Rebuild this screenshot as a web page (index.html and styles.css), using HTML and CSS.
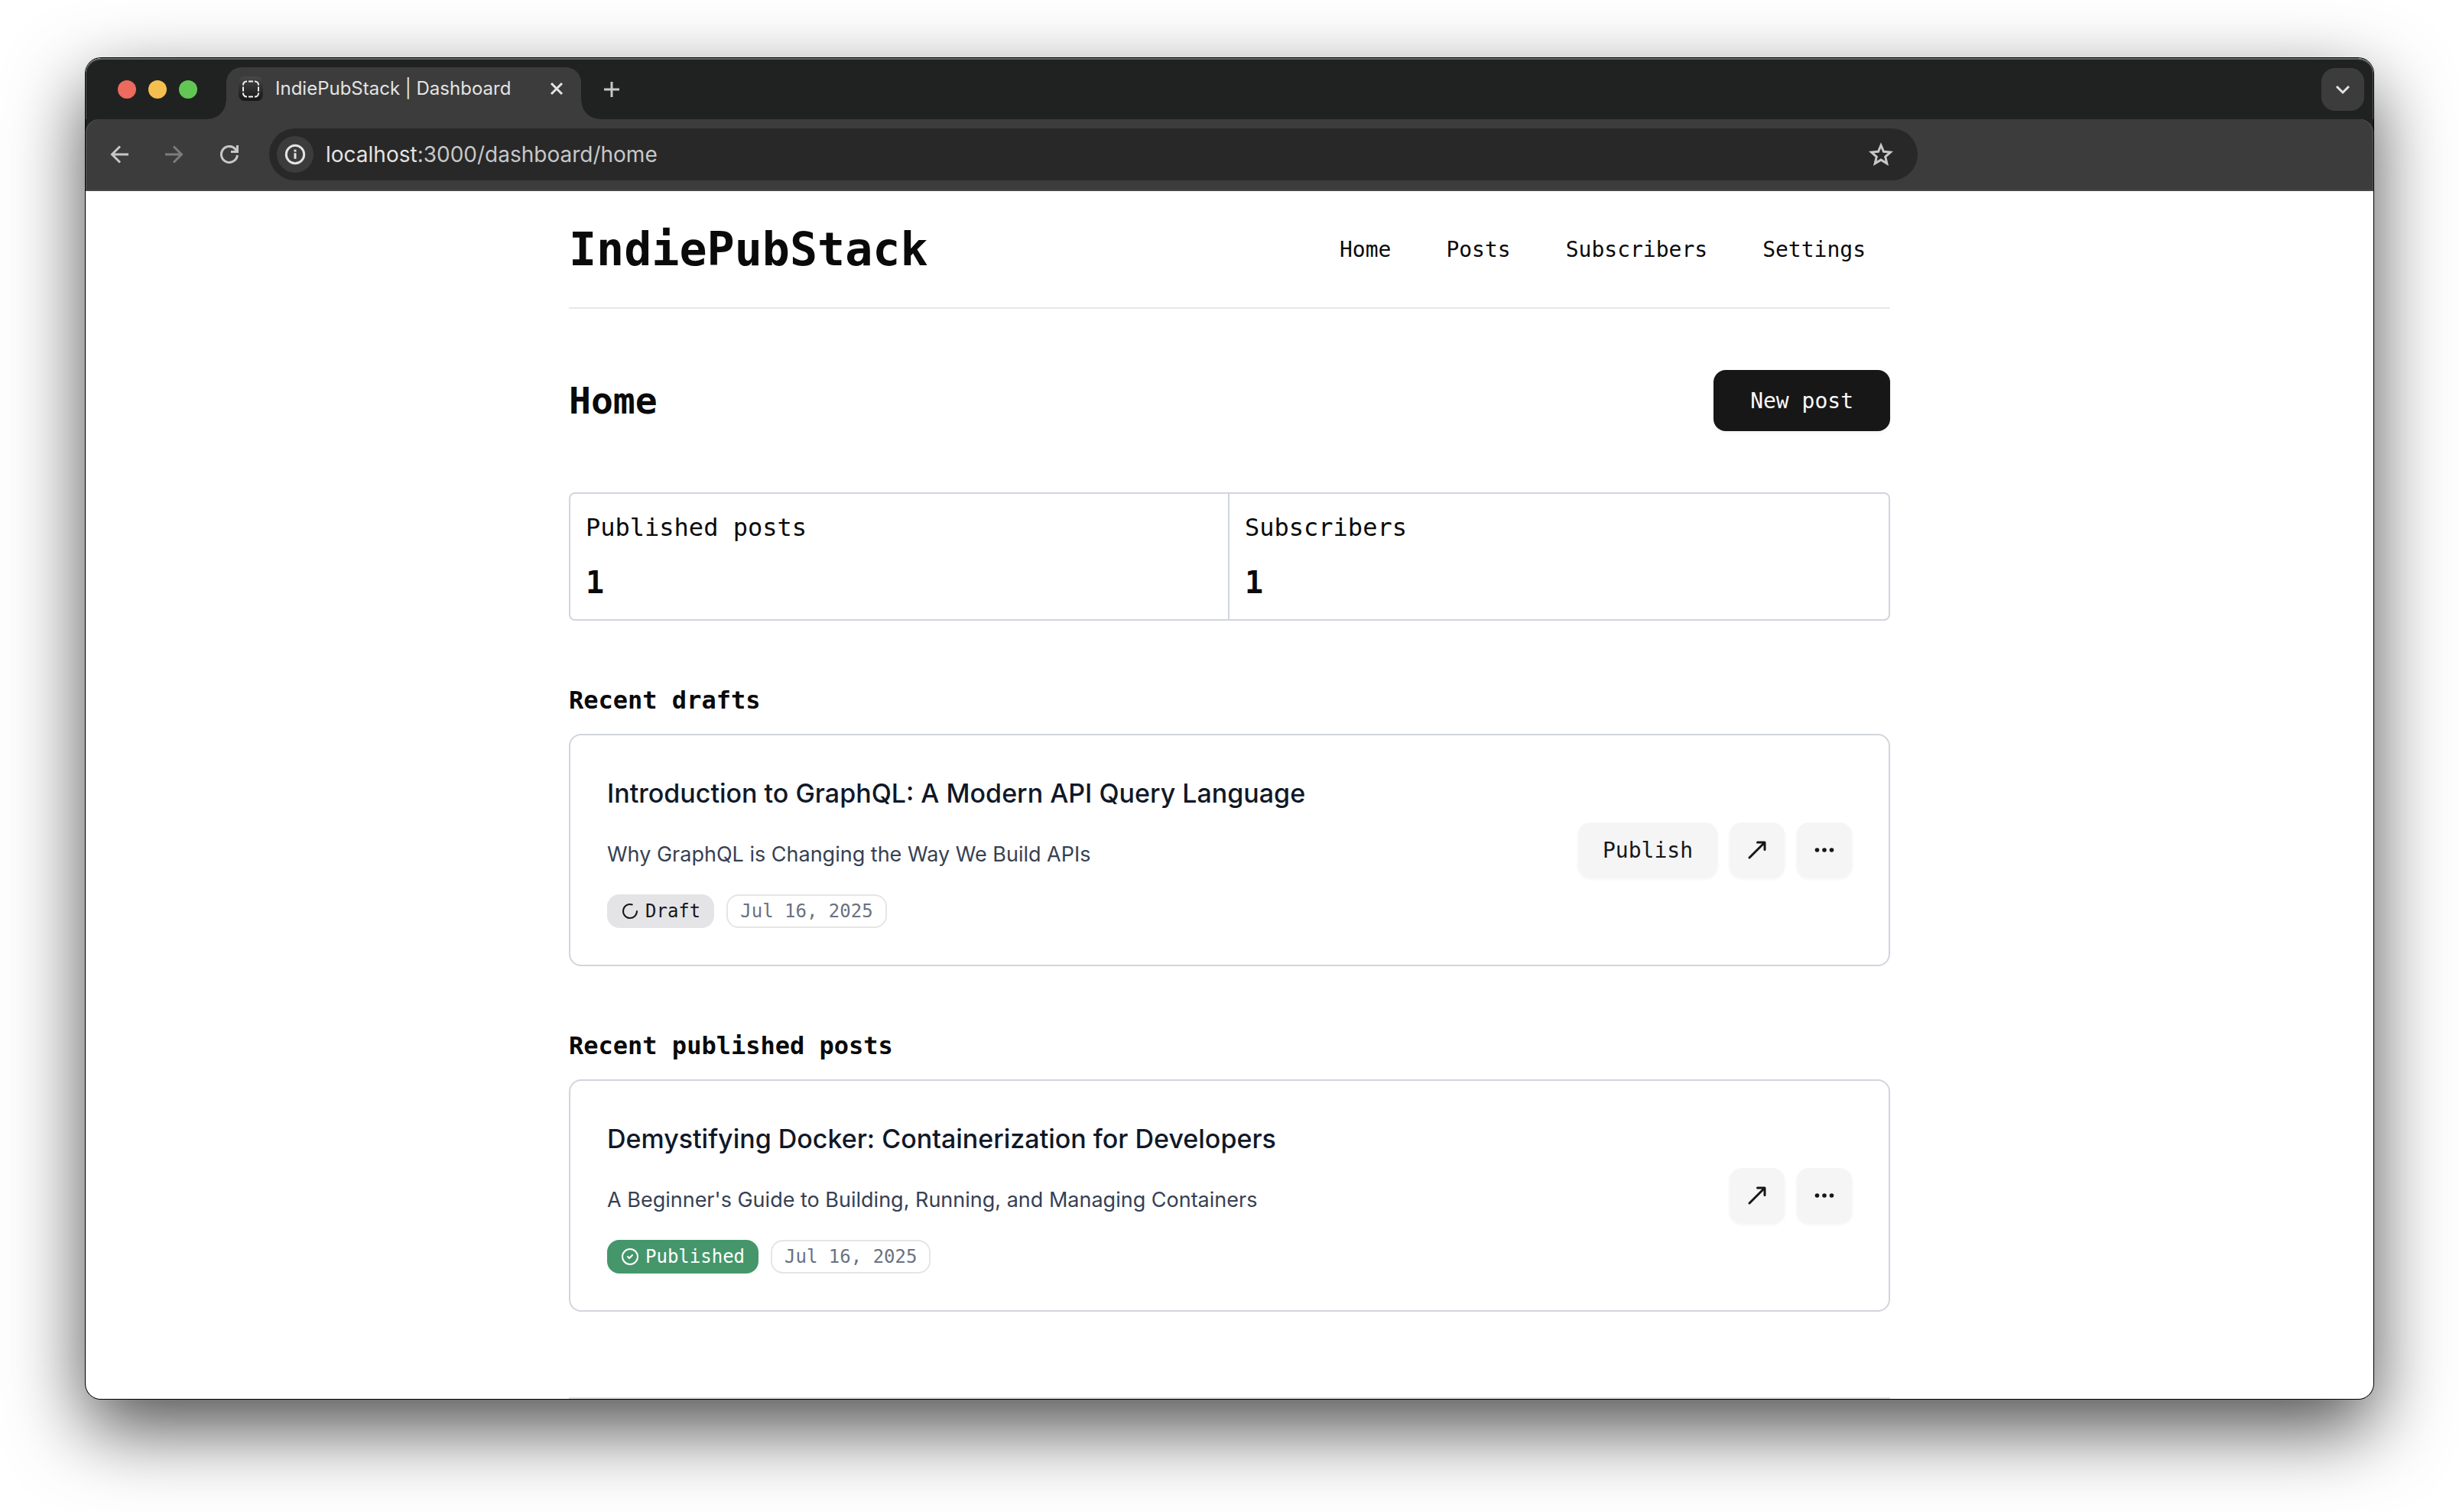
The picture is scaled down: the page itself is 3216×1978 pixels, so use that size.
FILE: index.html
```html
<!DOCTYPE html>
<html lang="en">
<head>
<meta charset="utf-8">
<title>IndiePubStack | Dashboard</title>
<link rel="stylesheet" href="styles.css">
</head>
<body>
<div class="window">
  <div class="tab-strip">
    <div class="lights">
      <span class="light light-close"></span>
      <span class="light light-min"></span>
      <span class="light light-max"></span>
    </div>
    <div class="tab">
      <svg class="favicon" viewBox="0 0 32 32" aria-hidden="true">
        <defs>
          <linearGradient id="favicon-bg" x1="0" y1="0" x2="0" y2="1">
            <stop offset="0" stop-color="#484848"/><stop offset="1" stop-color="#161616"/>
          </linearGradient>
        </defs>
        <rect width="32" height="32" rx="8" fill="url(#favicon-bg)" stroke="none"/>
        <g stroke="#f2f2f2" stroke-width="2" stroke-linecap="butt">
          <path d="M13 6.500h6M13 26.500h6M6 13.500v6M26 13.500v6"/>
          <path d="M6 11.500V11a4.500 4.500 0 0 1 4.500-4.500h.5M21 6.500h.5A4.500 4.500 0 0 1 26 11v.5M26 21.500v.5a4.500 4.500 0 0 1-4.500 4.500H21M11 26.500h-.5A4.500 4.500 0 0 1 6 22v-.5"/>
        </g>
      </svg>
      <span class="tab-title">IndiePubStack | Dashboard</span>
      <button class="chrome-btn" aria-label="Close tab">
        <svg viewBox="0 0 24 24"><path d="M5 5l14 14M19 5L5 19"/></svg>
      </button>
    </div>
    <button class="chrome-btn" aria-label="New tab">
      <svg viewBox="0 0 24 24"><path d="M12 2v20M2 12h20"/></svg>
    </button>
    <button class="tab-search" aria-label="Search tabs">
      <svg viewBox="0 0 24 24"><path d="M4 8l8 8 8-8"/></svg>
    </button>
  </div>
  <div class="toolbar">
    <div class="nav-buttons">
      <button class="chrome-btn" aria-label="Back">
        <svg viewBox="0 0 24 24"><path d="M24 12H2M13 1.500L2.500 12 13 22.500"/></svg>
      </button>
      <button class="chrome-btn dim" aria-label="Forward">
        <svg viewBox="0 0 24 24"><path d="M0 12h22M11 1.500L21.500 12 11 22.500"/></svg>
      </button>
      <button class="chrome-btn" aria-label="Reload">
        <svg viewBox="0 0 24 24"><path d="M22.400 13A10.500 10.500 0 1 1 19.800 5L22 8M22.500 0v8.500H14"/></svg>
      </button>
    </div>
    <div class="omnibox">
      <button class="site-info" aria-label="Site information">
        <svg viewBox="0 0 28 28"><circle cx="14" cy="14" r="11.700"/><path d="M14 12.300v7.500M14 7.700v2.700"/></svg>
      </button>
      <span class="url"><span class="host">localhost</span>:3000/dashboard/home</span>
      <button class="chrome-btn star" aria-label="Bookmark this page">
        <svg viewBox="0 0 32 32"><path d="M16 4l3.500 8.300 9 .8-6.800 5.900 2.100 8.800L16 23.100l-7.800 4.700 2.100-8.800-6.800-5.900 9-.8z"/></svg>
      </button>
    </div>
  </div>

  <div class="page">
    <header class="site-header">
      <a class="brand" href="#">IndiePubStack</a>
      <nav class="site-nav">
        <a href="#">Home</a>
        <a href="#">Posts</a>
        <a href="#">Subscribers</a>
        <a href="#">Settings</a>
      </nav>
    </header>

    <main class="main">
      <div class="title-row">
        <h1>Home</h1>
        <button class="btn btn-primary">New post</button>
      </div>

      <dl class="stats">
        <div class="stat"><dt>Published posts</dt><dd>1</dd></div>
        <div class="stat"><dt>Subscribers</dt><dd>1</dd></div>
      </dl>

      <section class="section">
        <h2>Recent drafts</h2>
        <article class="card">
          <div class="card-body">
            <h3>Introduction to GraphQL: A Modern API Query Language</h3>
            <p>Why GraphQL is Changing the Way We Build APIs</p>
            <div class="badges">
              <span class="badge badge-draft">
                <svg viewBox="0 0 24 24"><path d="M21 12a9 9 0 1 1-6.219-8.560"/></svg>Draft</span>
              <span class="badge">Jul 16, 2025</span>
            </div>
          </div>
          <div class="actions">
            <button class="btn">Publish</button>
            <button class="btn btn-icon" aria-label="Open post">
              <svg viewBox="0 0 32 32"><path d="M6 26L25.500 6.500M16.500 6h9.500v9.500"/></svg>
            </button>
            <button class="btn btn-icon" aria-label="More actions">
              <svg class="dots" viewBox="0 0 32 32"><circle cx="6.500" cy="16" r="2.800"/><circle cx="16" cy="16" r="2.800"/><circle cx="25.500" cy="16" r="2.800"/></svg>
            </button>
          </div>
        </article>
      </section>

      <section class="section">
        <h2>Recent published posts</h2>
        <article class="card">
          <div class="card-body">
            <h3>Demystifying Docker: Containerization for Developers</h3>
            <p>A Beginner's Guide to Building, Running, and Managing Containers</p>
            <div class="badges">
              <span class="badge badge-published">
                <svg viewBox="0 0 24 24"><circle cx="12" cy="12" r="10"/><path d="M9 12l2 2 4-4"/></svg>Published</span>
              <span class="badge">Jul 16, 2025</span>
            </div>
          </div>
          <div class="actions">
            <button class="btn btn-icon" aria-label="Open post">
              <svg viewBox="0 0 32 32"><path d="M6 26L25.500 6.500M16.500 6h9.500v9.500"/></svg>
            </button>
            <button class="btn btn-icon" aria-label="More actions">
              <svg class="dots" viewBox="0 0 32 32"><circle cx="6.500" cy="16" r="2.800"/><circle cx="16" cy="16" r="2.800"/><circle cx="25.500" cy="16" r="2.800"/></svg>
            </button>
          </div>
        </article>
      </section>
    </main>
    <footer class="site-footer"></footer>
  </div>
</div>
</body>
</html>
```

FILE: styles.css
```css
*, *::before, *::after { box-sizing: border-box; }

:root {
  --mono: "DejaVu Sans Mono", "Liberation Mono", monospace;
  --sans: Inter, "Liberation Sans", sans-serif;
  --strip: #202221;
  --bar: #3c3c3c;
  --line: #d1d5dc;
  --ink: #0a0a0a;
}

body {
  margin: 0;
  padding: 76px 112px 148px;
  background: #fff;
  color: var(--ink);
  font-family: var(--sans);
}

h1, h2, h3, p, dl, dd { margin: 0; }
button { margin: 0; padding: 0; border: 0; background: none; font: inherit; color: inherit; }
a { color: inherit; text-decoration: none; }
svg { display: block; fill: none; stroke: currentColor; stroke-linecap: round; stroke-linejoin: round; }

.window {
  border-radius: 20px;
  overflow: hidden;
  background: #fff;
  box-shadow: 0 0 0 1px #000, 0 38px 100px rgba(0, 0, 0, 0.7);
}

/* Browser chrome */
.tab-strip {
  display: flex;
  align-items: center;
  height: 80px;
  padding: 0 12px 0 42px;
  border-top: 2px solid #636766;
  border-radius: 20px 20px 0 0;
  background: var(--strip);
  box-shadow: inset 1px 0 #555857, inset -1px 0 #555857;
  color: #c7c7c7;
}
.lights { display: flex; gap: 16px; }
.light { width: 24px; height: 24px; border-radius: 50%; }
.light-close { background: #ed6a5f; }
.light-min { background: #f5bf4f; }
.light-max { background: #62c655; }

.tab {
  position: relative;
  display: flex;
  align-items: center;
  align-self: flex-end;
  width: 464px;
  height: 68px;
  margin: 0 28px 0 38px;
  padding: 0 20px 12px 16px;
  border-radius: 20px 20px 0 0;
  background: var(--bar);
  color: #e3e3e3;
}
.tab::before, .tab::after {
  content: "";
  position: absolute;
  bottom: 0;
  width: 24px;
  height: 24px;
}
.tab::before { right: 100%; background: radial-gradient(circle at 0 0, transparent 23px, var(--bar) 24px); }
.tab::after { left: 100%; background: radial-gradient(circle at 100% 0, transparent 23px, var(--bar) 24px); }
.favicon { width: 32px; height: 32px; margin-right: 16px; }
.tab-title { flex: 1; font-size: 24px; line-height: 32px; white-space: nowrap; }

.chrome-btn svg { width: 24px; height: 24px; stroke-width: 3; stroke-linecap: butt; stroke-linejoin: miter; }
.chrome-btn.dim { color: #7c7c7c; }
.tab-search {
  display: grid;
  place-items: center;
  width: 56px;
  height: 56px;
  margin-left: auto;
  border-radius: 18px;
  background: var(--bar);
  color: #e3e3e3;
}
.tab-search svg { width: 24px; height: 24px; stroke-width: 3; stroke-linecap: butt; stroke-linejoin: miter; }

.toolbar {
  position: relative;
  z-index: 0;
  display: flex;
  align-items: center;
  gap: 40px;
  height: 94px;
  padding: 0 596px 0 32px;
  border-bottom: 2px solid #484848;
  background: linear-gradient(var(--strip), var(--strip)) top / 100% 20px no-repeat;
  background-color: var(--bar);
  color: #c7c7c7;
}
.toolbar::before {
  content: "";
  position: absolute;
  inset: 0;
  z-index: -1;
  border-radius: 18px 18px 0 0;
  background: var(--bar);
  box-shadow: inset 1px 0 #5a5a5a, inset -1px 0 #5a5a5a;
}
.nav-buttons { display: flex; gap: 48px; }
.omnibox {
  display: flex;
  flex: 1;
  align-items: center;
  height: 68px;
  padding: 0 32px 0 10px;
  border-radius: 34px;
  background: #282828;
}
.site-info {
  display: grid;
  place-items: center;
  width: 48px;
  height: 48px;
  margin-right: 16px;
  border-radius: 50%;
  background: var(--bar);
  color: #e3e3e3;
}
.site-info svg { width: 28px; height: 28px; stroke-width: 3; stroke-linecap: butt; }
.url { flex: 1; font-size: 28px; line-height: 40px; }
.host { color: #e3e3e3; }
.star svg { width: 32px; height: 32px; }

/* Dashboard page */
.page {
  max-width: 1728px;
  margin: 0 auto;
  font-family: var(--mono);
}
.site-header {
  display: flex;
  align-items: center;
  justify-content: space-between;
  padding: 36px 32px 36px 0;
  border-bottom: 2px solid #e5e7eb;
}
.brand { font-size: 60px; line-height: 80px; font-weight: 700; }
.site-nav { display: flex; gap: 72px; padding-top: 2px; font-size: 28px; line-height: 40px; }

.main {
  display: flex;
  flex-direction: column;
  gap: 80px;
  padding: 80px 0 112px;
}
.title-row { display: flex; align-items: center; justify-content: space-between; }
h1 { font-size: 48px; line-height: 64px; font-weight: 700; }
h2 { font-size: 32px; line-height: 48px; font-weight: 700; }

.btn {
  height: 72px;
  padding: 2px 32px 0;
  border-radius: 16px;
  background: #f5f5f5;
  box-shadow: 0 2px 4px rgba(0, 0, 0, 0.05);
  color: #171717;
  font-size: 28px;
  line-height: 40px;
}
.btn-primary { height: 80px; padding: 2px 48px 0; background: #171717; color: #fafafa; }
.btn-icon { display: grid; place-items: center; width: 72px; padding: 0; }
.btn-icon svg { width: 32px; height: 32px; stroke-width: 3; }
.btn-icon .dots { fill: currentColor; stroke: none; }

.stats {
  display: grid;
  grid-template-columns: 1fr 1fr;
  border: 2px solid var(--line);
  border-radius: 8px;
}
.stat { display: flex; flex-direction: column; gap: 20px; padding: 20px; }
.stat:first-child { border-right: 2px solid var(--line); }
.stat dt { font-size: 32px; line-height: 48px; }
.stat dd { font-size: 40px; line-height: 56px; font-weight: 700; }

.section { display: flex; flex-direction: column; gap: 20px; }
.card {
  display: flex;
  align-items: center;
  justify-content: space-between;
  padding: 48px;
  border: 2px solid var(--line);
  border-radius: 16px;
}
.card-body { display: flex; flex-direction: column; gap: 32px; }
.card h3 { color: #101828; font-family: var(--sans); font-size: 34px; line-height: 56px; font-weight: 500; }
.card p { color: #364153; font-family: var(--sans); font-size: 27px; line-height: 40px; }
.badges { display: flex; gap: 16px; }
.badge {
  display: flex;
  align-items: center;
  gap: 8px;
  height: 44px;
  padding: 0 16px;
  border: 2px solid #e5e5e5;
  border-radius: 16px;
  color: #6a7282;
  font-size: 24px;
  line-height: 32px;
}
.badge svg { width: 24px; height: 24px; stroke-width: 2; }
.badge-draft { border-color: #e4e4e7; background: #e4e4e7; color: #171717; }
.badge-published { border-color: #45976b; background: #45976b; color: #fff; }
.actions { display: flex; gap: 16px; }

.site-footer { border-top: 2px solid #dcdfe0; }
```
